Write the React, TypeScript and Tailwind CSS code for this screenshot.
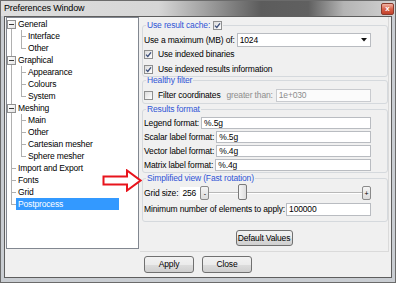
import React from 'react';

type Node = { label: string; children?: string[]; selected?: boolean };
type Row = {
  label: string;
  depth: 0 | 1;
  expander?: boolean;
  firstRoot?: boolean;
  lastRoot?: boolean;
  lastChild?: boolean;
  selected?: boolean;
};

const tree: Node[] = [
  { label: 'General', children: ['Interface', 'Other'] },
  { label: 'Graphical', children: ['Appearance', 'Colours', 'System'] },
  { label: 'Meshing', children: ['Main', 'Other', 'Cartesian mesher', 'Sphere mesher'] },
  { label: 'Import and Export' },
  { label: 'Fonts' },
  { label: 'Grid' },
  { label: 'Postprocess', selected: true },
];

const rows: Row[] = [];
tree.forEach((n, i) => {
  rows.push({
    label: n.label,
    depth: 0,
    expander: !!n.children,
    firstRoot: i === 0,
    lastRoot: i === tree.length - 1,
    selected: n.selected,
  });
  n.children?.forEach((c, j) =>
    rows.push({ label: c, depth: 1, lastChild: j === n.children!.length - 1 })
  );
});

function Expander() {
  return (
    <span className="absolute left-0 top-[2px] z-10 flex h-[9px] w-[9px] items-center justify-center border border-[#919191] bg-[linear-gradient(135deg,#ffffff,#e4e4e4)]">
      <span className="h-px w-[5px] bg-[#3a3a3a]" />
    </span>
  );
}

function TreeRow({ row }: { row: Row }) {
  const rootLine =
    row.depth === 1
      ? 'top-0 h-full'
      : row.firstRoot
        ? 'top-[6px] h-[6px]'
        : row.lastRoot
          ? 'top-0 h-[6px]'
          : 'top-0 h-full';
  return (
    <div className="flex h-[12px] items-center leading-[12px]">
      <div className="relative h-full w-[9px] shrink-0">
        <span className={`absolute left-[4px] w-px bg-[#b0b0b0] ${rootLine}`} />
        {row.depth === 0 &&
          (row.expander ? (
            <Expander />
          ) : (
            <span className="absolute left-[4px] top-[6px] h-px w-[5px] bg-[#b0b0b0]" />
          ))}
      </div>
      {row.depth === 1 && (
        <div className="relative h-full w-[10px] shrink-0">
          <span
            className={`absolute left-[5px] top-0 w-px bg-[#b0b0b0] ${row.lastChild ? 'h-[6px]' : 'h-full'}`}
          />
          <span className="absolute left-[5px] top-[6px] h-px w-[5px] bg-[#b0b0b0]" />
        </div>
      )}
      <span className={row.selected ? 'w-[103px] bg-[#3399ff] px-[2px] text-white' : 'px-[2px]'}>
        {row.label}
      </span>
    </div>
  );
}

function Check({ checked }: { checked?: boolean }) {
  return (
    <span className="flex h-[9px] w-[9px] shrink-0 items-center justify-center border border-[#8e8f8f] bg-[linear-gradient(135deg,#dcdcdc,#ffffff)]">
      {checked && (
        <svg width="7" height="7" viewBox="0 0 7 7">
          <path d="M1 3.6 L2.8 5.5 L6 1.3" fill="none" stroke="#3c4f7a" strokeWidth="1.3" />
        </svg>
      )}
    </span>
  );
}

function Group({
  title,
  className = '',
  children,
}: {
  title: React.ReactNode;
  className?: string;
  children: React.ReactNode;
}) {
  return (
    <fieldset className={`ml-[2px] rounded-[3px] border border-[#d5d9dd] pl-[1px] pr-[16px] ${className}`}>
      <legend className="ml-[2px] px-[1px] leading-[11px] text-[#2f54d6]">{title}</legend>
      {children}
    </fieldset>
  );
}

function Field({ value, className = '' }: { value: string; className?: string }) {
  return (
    <div className={`flex flex-1 items-center border border-[#b9bcc1] bg-white pl-[2px] ${className}`}>
      {value}
    </div>
  );
}

function Button({ children, className = '' }: { children: React.ReactNode; className?: string }) {
  return (
    <button className={`flex items-center justify-center rounded-[3px] border border-[#707070] bg-[linear-gradient(#f2f2f2_0%,#ebebeb_50%,#dddddd_50%,#cfcfcf_100%)] leading-[11px] ${className}`}>
      {children}
    </button>
  );
}

function SmallButton({ children }: { children: React.ReactNode }) {
  return (
    <span className="flex h-[14px] w-[9px] shrink-0 items-center justify-center rounded-[2px] border border-[#8a8a8a] bg-[linear-gradient(#f4f4f4,#dcdcdc)] text-[7px] leading-none">
      {children}
    </span>
  );
}

export default function App() {
  return (
    <div className="relative flex h-[283px] w-[396px] flex-col border border-[#6b6b6b] bg-[#c9cdd2] font-['Liberation_Sans',Arial,sans-serif] text-[8.5px] leading-[11px] tracking-[-0.15px] text-black">
      {/* title bar */}
      <div className="flex h-[15px] shrink-0 items-center justify-between bg-[linear-gradient(90deg,#dedede_0%,#d6d6d6_40%,#a0a0a0_52%,#5c5c5c_66%,#606060_78%,#b4b4b4_87%,#d2d2d2_100%)] pl-[3px] pr-[1px]">
        <span className="text-[9px]">Preferences Window</span>
        <span className="flex h-[12px] w-[13px] items-center justify-center rounded-[2px] border border-[#8a3a2c] bg-[linear-gradient(#f2b4a4,#d8634a_50%,#c2402a)] text-[8px] font-bold leading-none text-white">
          x
        </span>
      </div>

      {/* client area */}
      <div className="mx-[3px] mb-[4px] flex flex-1 flex-col border border-[#5e5e5e] bg-[#f0f0f0]">
        <div className="flex items-start">
          {/* tree */}
          <div className="ml-[1px] h-[232px] w-[133px] shrink-0 border border-[#828790] bg-white pl-0">
            {rows.map((r, i) => (
              <TreeRow key={i} row={r} />
            ))}
          </div>

          {/* settings panel */}
          <div className="ml-[1px] flex h-[235px] w-[249px] shrink-0 flex-col border-b border-r border-[#dadada]">
            <Group
              className="mt-[3px]"
              title={
                <span className="flex items-center gap-[3px]">
                  Use result cache:
                  <Check checked />
                </span>
              }
            >
              <div className="mt-[2px] flex h-[14px] items-center">
                <span>Use a maximum (MB) of:</span>
                <div className="ml-[2px] flex h-[14px] flex-1 items-center border border-[#b9bcc1] bg-white pl-[2px] pr-[3px]">
                  <span className="flex-1">1024</span>
                  <svg width="6" height="4" viewBox="0 0 6 4">
                    <path d="M0 0 H6 L3 3.5 Z" fill="#111" />
                  </svg>
                </div>
              </div>
              <div className="flex h-[15px] items-center gap-[5px]">
                <Check checked />
                <span>Use indexed binaries</span>
              </div>
              <div className="flex h-[14px] items-center gap-[5px]">
                <Check checked />
                <span>Use indexed results information</span>
              </div>
            </Group>

            <Group className="-mt-[2px] pb-[1px]" title="Healthy filter">
              <div className="mt-[3px] flex h-[13px] items-center">
                <Check />
                <span className="ml-[5px]">Filter coordinates</span>
                <span className="ml-[6px] text-[#8d8d8d]">greater than:</span>
                <div className="ml-[3px] flex h-[13px] flex-1 items-center border border-[#c9cbcf] bg-[#fbfbfb] pl-[2px] text-[#8d8d8d]">
                  1e+030
                </div>
              </div>
            </Group>

            <Group title="Results format">
              <div className="pt-[1px]">
                {[
                  ['Legend format:', '%.5g'],
                  ['Scalar label format:', '%.5g'],
                  ['Vector label format:', '%.4g'],
                  ['Matrix label format:', '%.4g'],
                ].map(([label, value]) => (
                  <div key={label} className="flex h-[14px] items-center">
                    <span>{label}</span>
                    <Field value={value} className="ml-[2px] h-[12px]" />
                  </div>
                ))}
              </div>
            </Group>

            <Group className="pb-[5px]" title="Simplified view (Fast rotation)">
              <div className="mt-[2px] flex h-[14px] items-center">
                <span>Grid size:</span>
                <span className="ml-[2px] flex h-[13px] w-[20px] items-center bg-white pl-[2px]">256</span>
                <SmallButton>-</SmallButton>
                <div className="relative flex h-full flex-1 items-center">
                  <span className="h-[2px] w-full border-b border-white bg-[#b8b8b8]" />
                  <span className="absolute left-[29px] top-[-2px] h-[16px] w-[9px] rounded-[2px] border border-[#7a7a7a] bg-[linear-gradient(90deg,#f6f6f6,#dedede)]" />
                </div>
                <SmallButton>+</SmallButton>
              </div>
              <div className="mt-[2px] flex h-[14px] items-center">
                <span>Minimum number of elements to apply:</span>
                <Field value="100000" className="ml-[1px] h-[13px]" />
              </div>
            </Group>

            <Button className="mx-auto mt-[8px] h-[16px] w-[57px]">Default Values</Button>
          </div>
        </div>

        <div className="flex justify-center gap-[8px] pt-[4px]">
          <Button className="h-[17px] w-[50px]">Apply</Button>
          <Button className="h-[17px] w-[50px]">Close</Button>
        </div>
      </div>

      {/* red annotation arrow */}
      <svg className="absolute left-[101px] top-[168px]" width="40" height="23" viewBox="0 0 40 23">
        <path
          d="M1.5 7.5 H25 V1.5 L38.5 11.5 L25 21.5 V15.5 H1.5 Z"
          fill="#ffffff"
          stroke="#e8141c"
          strokeWidth="2"
          strokeLinejoin="miter"
        />
      </svg>
    </div>
  );
}
